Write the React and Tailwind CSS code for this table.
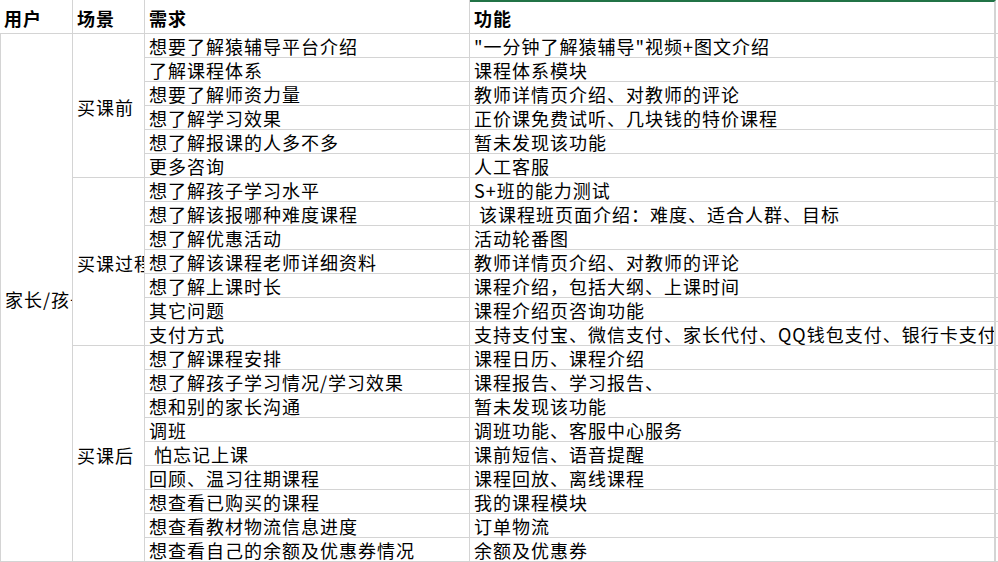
import React from "react";

const groups = [
  {
    scene: "买课前",
    rows: [
      ["想要了解猿辅导平台介绍", "\"一分钟了解猿辅导\"视频+图文介绍"],
      ["了解课程体系", "课程体系模块"],
      ["想要了解师资力量", "教师详情页介绍、对教师的评论"],
      ["想了解学习效果", "正价课免费试听、几块钱的特价课程"],
      ["想了解报课的人多不多", "暂未发现该功能"],
      ["更多咨询", "人工客服"],
    ],
  },
  {
    scene: "买课过程",
    rows: [
      ["想了解孩子学习水平", "S+班的能力测试"],
      ["想了解该报哪种难度课程", "\u00A0该课程班页面介绍：难度、适合人群、目标"],
      ["想了解优惠活动", "活动轮番图"],
      ["想了解该课程老师详细资料", "教师详情页介绍、对教师的评论"],
      ["想了解上课时长", "课程介绍，包括大纲、上课时间"],
      ["其它问题", "课程介绍页咨询功能"],
      ["支付方式", "支持支付宝、微信支付、家长代付、QQ钱包支付、银行卡支付"],
    ],
  },
  {
    scene: "买课后",
    rows: [
      ["想了解课程安排", "课程日历、课程介绍"],
      ["想了解孩子学习情况/学习效果", "课程报告、学习报告、"],
      ["想和别的家长沟通", "暂未发现该功能"],
      ["调班", "调班功能、客服中心服务"],
      ["\u00A0怕忘记上课", "课前短信、语音提醒"],
      ["回顾、温习往期课程", "课程回放、离线课程"],
      ["想查看已购买的课程", "我的课程模块"],
      ["想查看教材物流信息进度", "订单物流"],
      ["想查看自己的余额及优惠券情况", "余额及优惠券"],
    ],
  },
];

const spans = { 6: "row-span-6", 7: "row-span-7", 9: "row-span-9" };

const cell =
  "border-r border-b border-[#d4d4d4] overflow-hidden whitespace-nowrap pl-[4px] leading-[24px]";

export default function App() {
  return (
    <div
      className="w-[998px] h-[562px] bg-white text-black overflow-hidden text-[18px] tracking-[1px]"
      style={{ fontFamily: '"Noto Sans CJK SC", "Noto Sans", sans-serif' }}
    >
      <div className="grid grid-cols-[73px_72px_325px_526px_2px] grid-rows-[34px_repeat(22,24px)]">
        {/* header */}
        <div className={`${cell} font-bold pt-[6px]`}>用户</div>
        <div className={`${cell} font-bold pt-[6px]`}>场景</div>
        <div className={`${cell} font-bold pt-[6px]`}>需求</div>
        <div className={`${cell} border-r-2 border-t-2 border-t-[#217346] font-bold pt-[4px]`}>功能</div>
        <div className="border-b border-[#d4d4d4]" />

        {/* user merged */}
        <div className={`${cell} row-span-22 border-l flex items-center pt-[3px]`}>家长/孩子</div>

        {groups.map((g) => (
          <React.Fragment key={g.scene}>
            <div className={`${cell} ${spans[g.rows.length]} flex items-center pt-[2px]`}>
              {g.scene}
            </div>
            {g.rows.map(([need, func], i) => (
              <React.Fragment key={i}>
                <div className={`${cell} col-start-3`}>{need}</div>
                <div className={`${cell} border-r-2`}>{func}</div>
                <div className="border-b border-[#d4d4d4]" />
              </React.Fragment>
            ))}
          </React.Fragment>
        ))}
      </div>
    </div>
  );
}
